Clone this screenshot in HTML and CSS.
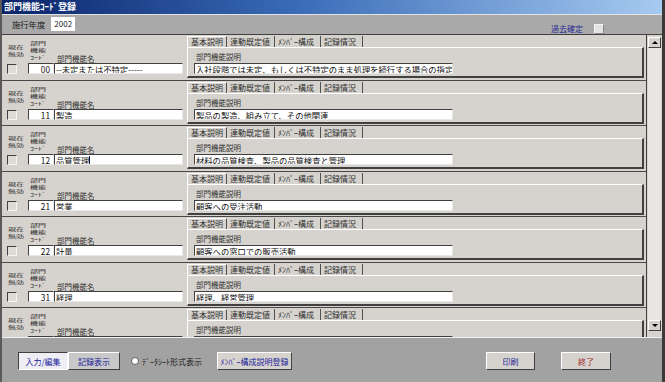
FILE: index.html
```html
<!DOCTYPE html>
<html lang="ja">
<head>
    <meta charset="UTF-8">
    <meta name="viewport" content="width=device-width, initial-scale=1.0">
    <title>部門機能コード登録</title>
    <link rel="stylesheet" href="styles.css">
</head>
<body>
    <div class="window">
        <div class="titlebar">部門機能ｺｰﾄﾞ登録</div>
        <div class="header">
            <span class="year-label">施行年度</span>
            <span class="year-box">2002</span>
            <span class="past-label">過去確定</span>
            <span class="past-check"></span>
        </div>
        <div class="list">
            <div class="rows">
                <div class="row">
                    <div class="fields">
                        <div class="lbl lbl-flag">現在<br>無効</div>
                        <div class="lbl lbl-code">部門<br>機能<br>ｺｰﾄﾞ</div>
                        <div class="lbl lbl-name">部門機能名</div>
                        <span class="check"></span>
                        <span class="box code">00</span>
                        <span class="box name">--未定または不特定-----</span>
                    </div>
                    <div class="tabctl">
                        <div class="tabs"><span class="tab active">基本説明</span><span class="tab">連動既定値</span><span class="tab">ﾒﾝﾊﾞｰ構成</span><span class="tab">記録情況</span></div>
                        <div class="panel">
                            <div class="lbl">部門機能説明</div>
                            <span class="box desc">入社段階では未定、もしくは不特定のまま処理を続行する場合の指定</span>
                        </div>
                    </div>
                </div>
                <div class="row">
                    <div class="fields">
                        <div class="lbl lbl-flag">現在<br>無効</div>
                        <div class="lbl lbl-code">部門<br>機能<br>ｺｰﾄﾞ</div>
                        <div class="lbl lbl-name">部門機能名</div>
                        <span class="check"></span>
                        <span class="box code">11</span>
                        <span class="box name">製造</span>
                    </div>
                    <div class="tabctl">
                        <div class="tabs"><span class="tab active">基本説明</span><span class="tab">連動既定値</span><span class="tab">ﾒﾝﾊﾞｰ構成</span><span class="tab">記録情況</span></div>
                        <div class="panel">
                            <div class="lbl">部門機能説明</div>
                            <span class="box desc">製品の製造、組み立て、その他関連</span>
                        </div>
                    </div>
                </div>
                <div class="row">
                    <div class="fields">
                        <div class="lbl lbl-flag">現在<br>無効</div>
                        <div class="lbl lbl-code">部門<br>機能<br>ｺｰﾄﾞ</div>
                        <div class="lbl lbl-name">部門機能名</div>
                        <span class="check"></span>
                        <span class="box code">12</span>
                        <span class="box name">品質管理<i class="caret"></i></span>
                    </div>
                    <div class="tabctl">
                        <div class="tabs"><span class="tab active">基本説明</span><span class="tab">連動既定値</span><span class="tab">ﾒﾝﾊﾞｰ構成</span><span class="tab">記録情況</span></div>
                        <div class="panel">
                            <div class="lbl">部門機能説明</div>
                            <span class="box desc">材料の品質検査、製品の品質検査と管理</span>
                        </div>
                    </div>
                </div>
                <div class="row">
                    <div class="fields">
                        <div class="lbl lbl-flag">現在<br>無効</div>
                        <div class="lbl lbl-code">部門<br>機能<br>ｺｰﾄﾞ</div>
                        <div class="lbl lbl-name">部門機能名</div>
                        <span class="check"></span>
                        <span class="box code">21</span>
                        <span class="box name">営業</span>
                    </div>
                    <div class="tabctl">
                        <div class="tabs"><span class="tab active">基本説明</span><span class="tab">連動既定値</span><span class="tab">ﾒﾝﾊﾞｰ構成</span><span class="tab">記録情況</span></div>
                        <div class="panel">
                            <div class="lbl">部門機能説明</div>
                            <span class="box desc">顧客への受注活動</span>
                        </div>
                    </div>
                </div>
                <div class="row">
                    <div class="fields">
                        <div class="lbl lbl-flag">現在<br>無効</div>
                        <div class="lbl lbl-code">部門<br>機能<br>ｺｰﾄﾞ</div>
                        <div class="lbl lbl-name">部門機能名</div>
                        <span class="check"></span>
                        <span class="box code">22</span>
                        <span class="box name">計量</span>
                    </div>
                    <div class="tabctl">
                        <div class="tabs"><span class="tab active">基本説明</span><span class="tab">連動既定値</span><span class="tab">ﾒﾝﾊﾞｰ構成</span><span class="tab">記録情況</span></div>
                        <div class="panel">
                            <div class="lbl">部門機能説明</div>
                            <span class="box desc">顧客への窓口での販売活動</span>
                        </div>
                    </div>
                </div>
                <div class="row">
                    <div class="fields">
                        <div class="lbl lbl-flag">現在<br>無効</div>
                        <div class="lbl lbl-code">部門<br>機能<br>ｺｰﾄﾞ</div>
                        <div class="lbl lbl-name">部門機能名</div>
                        <span class="check"></span>
                        <span class="box code">31</span>
                        <span class="box name">経理</span>
                    </div>
                    <div class="tabctl">
                        <div class="tabs"><span class="tab active">基本説明</span><span class="tab">連動既定値</span><span class="tab">ﾒﾝﾊﾞｰ構成</span><span class="tab">記録情況</span></div>
                        <div class="panel">
                            <div class="lbl">部門機能説明</div>
                            <span class="box desc">経理、経営管理</span>
                        </div>
                    </div>
                </div>
                <!-- last row is cut off by the list bottom -->
                <div class="row">
                    <div class="fields">
                        <div class="lbl lbl-flag">現在<br>無効</div>
                        <div class="lbl lbl-code">部門<br>機能<br>ｺｰﾄﾞ</div>
                        <div class="lbl lbl-name">部門機能名</div>
                        <span class="check"></span>
                        <span class="box code"></span>
                        <span class="box name"></span>
                    </div>
                    <div class="tabctl">
                        <div class="tabs"><span class="tab active">基本説明</span><span class="tab">連動既定値</span><span class="tab">ﾒﾝﾊﾞｰ構成</span><span class="tab">記録情況</span></div>
                        <div class="panel">
                            <div class="lbl">部門機能説明</div>
                            <span class="box desc"></span>
                        </div>
                    </div>
                </div>
            </div>
            <div class="scrollbar">
                <div class="sb-btn"><i class="arrow-up"></i></div>
                <div class="sb-track"></div>
                <div class="sb-btn"><i class="arrow-down"></i></div>
            </div>
        </div>
        <div class="footer">
            <span class="btn btn-on">入力/編集</span>
            <span class="btn btn-gray">記録表示</span>
            <span class="radio"></span>
            <span class="radio-label">ﾃﾞｰﾀｼｰﾄ形式表示</span>
            <span class="btn btn-member">ﾒﾝﾊﾞｰ構成説明登録</span>
            <span class="btn btn-print">印刷</span>
            <span class="btn btn-close">終了</span>
        </div>
    </div>
</body>
</html>
```

FILE: styles.css
```css
body {
    margin: 0;
    padding: 0;
    width: 665px;
    height: 382px;
    overflow: hidden;
    background-color: #d6d3ce;
    font-family: "Noto Sans CJK JP", sans-serif;
    font-size: 8px;
    color: #202020;
}
.window {
    display: flex;
    flex-direction: column;
    height: 382px;
    border-left: 2px solid #5a5a5a;
    border-right: 3px solid #3a3a3a;
}
.titlebar {
    height: 15px;
    line-height: 14px;
    padding-left: 2px;
    color: white;
    font-size: 9px;
    font-weight: bold;
    background: linear-gradient(to right, #0a246a, #3a6cb8 45%, #a6caf0);
    border-bottom: 1px solid #e4e4e4;
    box-sizing: border-box;
}
.header {
    height: 19px;
    display: flex;
    align-items: flex-start;
    padding-left: 10px;
    background-color: #a9a9a9;
}
.year-label {
    margin-top: 5px;
    line-height: 9px;
    font-size: 8.3px;
}
.year-box {
    margin-left: 6px;
    margin-top: 2px;
    width: 24px;
    height: 14px;
    line-height: 14px;
    text-align: center;
    background-color: white;
    color: #202020;
}
.past-label {
    margin-left: auto;
    margin-top: 9px;
    line-height: 9px;
    color: #2a2a9a;
}
.past-check {
    margin-left: 11px;
    margin-top: 9px;
    margin-right: 58px;
    width: 8px;
    height: 8px;
    background-color: #e4e4e4;
    border: 1px solid #f4f4f4;
    border-right-color: #8a8a8a;
    border-bottom-color: #8a8a8a;
}

/* record list */
.list {
    height: 304px;
    display: flex;
    border-top: 1px solid #404040;
    border-bottom: 1px solid #f0f0f0;
    box-sizing: border-box;
}
.rows {
    flex: 1;
    overflow: hidden;
    border-right: 1px solid #404040;
}
.row {
    height: 45.5px;
    display: flex;
    box-sizing: border-box;
    border-bottom: 1px solid #484848;
}
.fields {
    display: grid;
    grid-template-columns: 22px 26px 129px;
    grid-template-rows: 25px 11px;
    padding: 3px 0 0 4px;
}
.lbl {
    font-size: 7.5px;
    color: #303030;
}
/* the stacked captions are squashed vertically in the original form */
.lbl-flag,
.lbl-code {
    align-self: end;
    padding-left: 2px;
    font-size: 8px;
    line-height: 12px;
    color: #282828;
    transform: scaleY(0.58);
    transform-origin: left bottom;
}
.lbl-flag {
    margin-bottom: 5px;
}
.lbl-code {
    margin-bottom: 2px;
}
.lbl-name {
    align-self: end;
    padding-left: 3px;
    line-height: 9px;
}
.check {
    width: 8px;
    height: 8px;
    margin: 1px 0 0 1px;
    background-color: #dedbd6;
    border-top: 1px solid #404040;
    border-left: 1px solid #404040;
    border-right: 1px solid #f4f4f4;
    border-bottom: 1px solid #f4f4f4;
}
.box {
    display: block;
    height: 11px;
    line-height: 10px;
    font-size: 8.3px;
    color: #101010;
    white-space: nowrap;
    overflow: hidden;
    background-color: white;
    border-top: 1px solid #404040;
    border-left: 1px solid #404040;
    border-right: 1px solid #e8e8e8;
    border-bottom: 1px solid #e8e8e8;
    box-sizing: border-box;
    padding-left: 1px;
}
.code {
    text-align: right;
    padding-right: 3px;
}
.caret {
    display: inline-block;
    width: 1px;
    height: 9px;
    background-color: #101010;
    vertical-align: -1px;
}

/* tab control */
.tabctl {
    flex: 1;
    margin-left: 4px;
    margin-right: 2px;
    padding-top: 1px;
}
.tabs {
    display: flex;
    height: 11px;
}
.tab {
    line-height: 11px;
    padding: 0 3px;
    font-size: 8px;
    color: #303030;
    border-right: 1px solid #505050;
}
.tab:nth-child(1) { width: 32px; }
.tab:nth-child(2) { width: 41px; }
.tab:nth-child(3) { width: 39px; }
.tab:nth-child(4) { width: 35px; }
.tab.active {
    border-left: 1px solid #ffffff;
    border-top: 1px solid #ffffff;
    line-height: 10px;
}
.panel {
    height: 31px;
    box-sizing: border-box;
    padding: 4px 0 0 6px;
    border-top: 1px solid #ffffff;
    border-left: 1px solid #ffffff;
    border-right: 2px solid #404040;
    border-bottom: 2px solid #404040;
}
.panel .lbl {
    line-height: 9px;
    padding-left: 2px;
}
.desc {
    margin-top: 2px;
    width: 259px;
}

/* scroll bar */
.scrollbar {
    width: 15px;
    display: flex;
    flex-direction: column;
    padding: 2px 1px 6px 1px;
    box-sizing: border-box;
    background-color: #d6d3ce;
}
.sb-btn {
    height: 11px;
    display: flex;
    align-items: center;
    justify-content: center;
    background-color: #d6d3ce;
    border: 1px solid #ffffff;
    border-right-color: #404040;
    border-bottom-color: #404040;
    box-sizing: border-box;
}
.sb-track {
    flex: 1;
    background-color: #e8e6e2;
}
.arrow-up {
    width: 0;
    height: 0;
    border-left: 3px solid transparent;
    border-right: 3px solid transparent;
    border-bottom: 3px solid #000;
}
.arrow-down {
    width: 0;
    height: 0;
    border-left: 3px solid transparent;
    border-right: 3px solid transparent;
    border-top: 3px solid #000;
}

/* bottom command bar */
.footer {
    flex: 1;
    display: flex;
    align-items: center;
    padding: 2px 51px 0 16px;
    background-color: #a2a2a2;
}
.btn {
    height: 18px;
    line-height: 17px;
    text-align: center;
    font-size: 8px;
    color: #22229a;
    box-sizing: border-box;
    background-color: #d6d3ce;
    border: 1px solid #ffffff;
    border-right-color: #404040;
    border-bottom-color: #404040;
}
.btn-on {
    width: 50px;
    background-color: #eeeef4;
    border-color: #404040 #ffffff #ffffff #404040;
}
.btn-gray {
    width: 52px;
    background-color: #c8c8c8;
}
.radio {
    width: 8px;
    height: 8px;
    margin-left: 11px;
    border-radius: 50%;
    background-color: white;
    border: 1px solid #606060;
    box-sizing: border-box;
}
.radio-label {
    margin-left: 3px;
    color: #202020;
}
.btn-member {
    width: 75px;
    margin-left: 15px;
}
.btn-print {
    width: 49px;
    margin-left: auto;
}
.btn-close {
    width: 50px;
    margin-left: 26px;
    color: #a02828;
}
```
